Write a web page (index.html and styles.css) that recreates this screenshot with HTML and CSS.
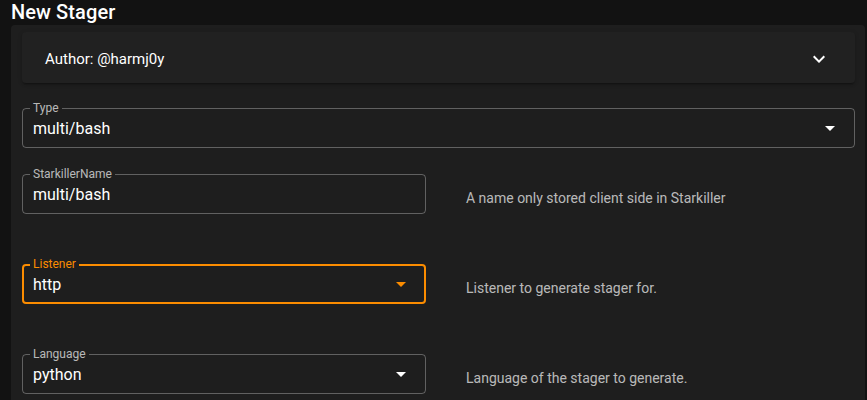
FILE: index.html
```html
<!DOCTYPE html>
<html>
<head>
<meta charset="utf-8">
<link rel="stylesheet" href="styles.css">
</head>
<body>
<div class="page">
  <h1 class="title">New Stager</h1>
  <div class="card">
    <div class="panel">
      <span class="panel-text">Author: @harmj0y</span>
      <svg class="chev" viewBox="0 0 24 24" width="24" height="24"><path d="M7.41,8.58L12,13.17L16.59,8.58L18,10L12,16L6,10L7.41,8.58Z" fill="#fff"/></svg>
    </div>

    <div class="field field-full">
      <span class="label">Type</span>
      <span class="value">multi/bash</span>
      <svg class="arrow" viewBox="0 0 24 24" width="24" height="24"><path d="M7,10L12,15L17,10H7Z" fill="#fff"/></svg>
    </div>

    <div class="row row-first">
      <div class="field">
        <span class="label">StarkillerName</span>
        <span class="value">multi/bash</span>
      </div>
      <div class="hint">A name only stored client side in Starkiller</div>
    </div>

    <div class="row">
      <div class="field focused">
        <span class="label">Listener</span>
        <span class="value">http</span>
        <svg class="arrow" viewBox="0 0 24 24" width="24" height="24"><path d="M7,10L12,15L17,10H7Z" fill="#fb8c00"/></svg>
      </div>
      <div class="hint">Listener to generate stager for.</div>
    </div>

    <div class="row">
      <div class="field">
        <span class="label">Language</span>
        <span class="value">python</span>
        <svg class="arrow" viewBox="0 0 24 24" width="24" height="24"><path d="M7,10L12,15L17,10H7Z" fill="#fff"/></svg>
      </div>
      <div class="hint">Language of the stager to generate.</div>
    </div>
  </div>
</div>
</body>
</html>
```

FILE: styles.css
```css
html, body {
  margin: 0;
  height: 100%;
  overflow: hidden;
}
body {
  background: #121212;
  font-family: Roboto, "Liberation Sans", sans-serif;
  color: #fff;
}
.page {
  padding: 0 2px 0 11px;
}
.title {
  margin: 0;
  font-size: 20px;
  font-weight: 500;
  line-height: 24px;
  letter-spacing: 0.1px;
}
.card {
  margin-top: 1px;
  background: #1e1e1e;
  border-radius: 4px;
  padding: 7px 10px 40px 11px;
}
.panel {
  box-sizing: border-box;
  height: 51px;
  background: #212121;
  border-radius: 4px;
  box-shadow: 0 3px 1px -2px rgba(0,0,0,0.2), 0 2px 2px 0 rgba(0,0,0,0.14), 0 1px 5px 0 rgba(0,0,0,0.12);
  display: flex;
  align-items: center;
  justify-content: space-between;
  padding: 3px 24px 0 23px;
}
.panel-text {
  font-size: 15px;
}
.chev {
  display: block;
}
.field {
  position: relative;
  box-sizing: border-box;
  height: 40px;
  border: 1px solid rgba(255,255,255,0.3);
  border-radius: 4px;
  display: flex;
  align-items: center;
  padding: 0 12px 0 10px;
}
.field-full {
  margin-top: 25px;
}
.field.focused {
  border: 2px solid #fb8c00;
  padding: 0 11px 0 9px;
}
.label {
  position: absolute;
  top: -8px;
  left: 7px;
  padding: 0 3px;
  background: #1e1e1e;
  font-size: 12px;
  line-height: 14px;
  color: rgba(255,255,255,0.7);
}
.focused .label {
  left: 6px;
  top: -9px;
  color: #fb8c00;
}
.value {
  flex: 1;
  font-size: 16px;
  line-height: 20px;
  padding-top: 1px;
}
.arrow {
  display: block;
}
.row {
  display: grid;
  grid-template-columns: 404px 1fr;
  column-gap: 40px;
  align-items: center;
  margin-top: 50px;
}
.row-first {
  margin-top: 26px;
}
.hint {
  font-size: 14px;
  line-height: 20px;
  padding-top: 8px;
  color: rgba(255,255,255,0.7);
}
```
